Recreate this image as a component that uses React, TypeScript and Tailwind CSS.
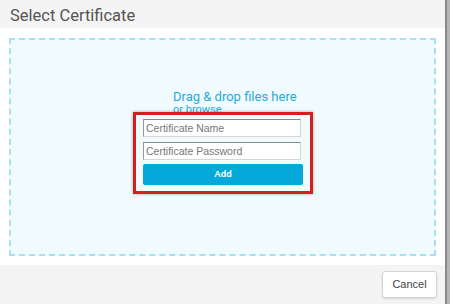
import { useState } from 'react'

const App = () => {
  const [name, setName] = useState('')
  const [password, setPassword] = useState('')

  return (
    <div className="flex h-[304px] w-[450px] overflow-hidden bg-[#b5b5b5]">
      <div className="flex h-full w-[447px] flex-col border-r-2 border-[#8a8a8a] bg-white font-['Roboto',sans-serif]">
        <div className="flex h-[28px] items-end bg-[#f4f4f4] px-[10px] pb-[2px]">
          <h1 className="text-[16.5px] leading-[20px] text-[#555]">Select Certificate</h1>
        </div>

        <div className="flex-1 px-[9px] pb-[9px] pt-[10px]">
          <div className="relative h-full border-2 border-dashed border-[#a9dfee] bg-[#effbfe]">
            <div className="ml-[162px] mt-[50px] flex flex-col text-[#2aa9dc]">
              <span className="text-[13px] leading-[14px]">Drag &amp; drop files here</span>
              <span className="text-[11px] leading-[12px]">or browse</span>
            </div>

            {/* highlighted form */}
            <div className="absolute left-[122px] top-[72px] flex w-[180px] flex-col gap-[5px] border-[3px] border-[#d21f1f] bg-[#f1fbfe] px-[7px] pb-[6px] pt-[4px] shadow-[0_0_3px_rgba(0,0,0,0.35)]">
              <input
                value={name}
                onChange={(e) => setName(e.target.value)}
                placeholder="Certificate Name"
                className="h-[18px] w-[158px] border border-[#d6d6d6] border-l-[#999] border-t-[#888] bg-white px-[2px] font-['Liberation_Sans',sans-serif] text-[10.5px] text-[#333] outline-none placeholder:text-[#777]"
              />
              <input
                type="password"
                value={password}
                onChange={(e) => setPassword(e.target.value)}
                placeholder="Certificate Password"
                className="-mb-[1px] h-[18px] w-[158px] border border-[#d6d6d6] border-l-[#999] border-t-[#888] bg-white px-[2px] font-['Liberation_Sans',sans-serif] text-[10.5px] text-[#333] outline-none placeholder:text-[#777]"
              />
              <button className="h-[21px] w-[160px] rounded-[2px] bg-[#04a9d9] font-['Liberation_Sans',sans-serif] text-[9px] font-bold text-white">
                Add
              </button>
            </div>
          </div>
        </div>

        <div className="flex h-[39px] items-center justify-end bg-[#f4f4f4] pr-[8px]">
          <button className="h-[27px] w-[55px] rounded-[3px] border border-[#d4d4d4] bg-white font-['Liberation_Sans',sans-serif] text-[11px] text-[#444] shadow-[0_1px_2px_rgba(0,0,0,0.12)]">
            Cancel
          </button>
        </div>
      </div>
    </div>
  )
}

export default App
